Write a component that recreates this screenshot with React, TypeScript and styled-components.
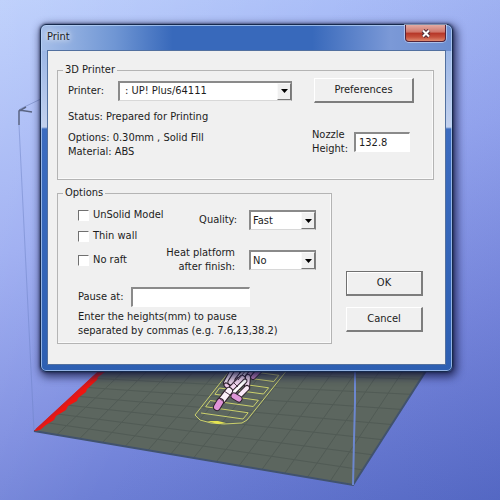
import React from 'react';
import styled, { createGlobalStyle } from 'styled-components';

const GlobalStyle = createGlobalStyle`
  *, *::before, *::after { box-sizing: border-box; }
  body { margin: 0; }
  body, button, input, select {
    font-family: "DejaVu Sans Condensed", Tahoma, "Noto Sans", sans-serif;
    font-size: 11px;
    line-height: 14px;
    color: #1c1c1c;
  }
`;

const Desktop = styled.main`
  position: relative;
  min-height: 100vh;
  overflow: hidden;
  padding: 24px 47px 40px 40px;
  background:
    linear-gradient(115deg, rgba(255, 255, 255, 0.16), rgba(255, 255, 255, 0) 45%, rgba(40, 50, 160, 0.12)),
    linear-gradient(165deg, #b4c9fb, #98a9f1 40%, #7b8bdf 70%, #5a6fc8);
`;

const Scene = styled.svg`
  position: absolute;
  inset: 0;
  width: 100%;
  height: 100%;
`;

const Dialog = styled.section`
  position: relative;
  padding: 0 6px 6px;
  border: 1px solid #16294d;
  border-radius: 6px;
  background:
    linear-gradient(90deg, rgba(178, 200, 238, 0.9), rgba(130, 165, 220, 0.75) 18%, rgba(60, 105, 185, 0) 32%, rgba(60, 105, 185, 0) 66%, rgba(140, 165, 222, 0.8) 85%, rgba(120, 150, 212, 0.8)) 0 0 / 100% 26px no-repeat,
    linear-gradient(180deg, #3869bb 0, #3869bb 26px, #9db7e6 26px, #c3d1ee 102px, #3c6cc0 104px, #2d5fb2);
  box-shadow: inset 0 0 0 1px rgba(190, 215, 250, 0.7), 0 0 3px rgba(10, 15, 45, 0.8), 2px 3px 9px 2px rgba(20, 24, 66, 0.75);
`;

const TitleBar = styled.header`
  display: flex;
  justify-content: space-between;
  align-items: flex-start;
  height: 25px;
`;

const Title = styled.h1`
  margin: 4px 0 0;
  font-size: 11px;
  line-height: 16px;
  font-weight: 400;
  text-shadow: 0 0 5px #fff, 0 0 8px #fff;
`;

const CloseButton = styled.button`
  display: grid;
  place-items: center;
  width: 41px;
  height: 17px;
  padding: 0;
  border: 1px solid #54243a;
  border-top: 0;
  border-radius: 0 0 4px 4px;
  background: linear-gradient(#e3aba4, #cf7468 45%, #b53527 50%, #c5503c 75%, #de8a70);
  box-shadow: 0 0 0 1px rgba(220, 230, 250, 0.55);
`;

const Client = styled.div`
  padding: 12px 11px 20px 9px;
  border: 1px solid #52709f;
  background: #f0f0f0;
`;

const Group = styled.fieldset`
  flex: 1;
  min-width: 0;
  margin: 0;
  padding: 0;
  border: 1px solid #b4b4b4;
  box-shadow: inset -1px -1px 0 #fafafa;
`;

const GroupBody = styled.div<{ $pad: string }>`
  padding: ${(p) => p.$pad};
`;

const Legend = styled.legend`
  margin-left: 5px;
  padding: 0 2px;
  line-height: 14px;
`;

const Row = styled.div<{ $gap?: number; $top?: number }>`
  display: flex;
  align-items: center;
  gap: ${(p) => p.$gap ?? 0}px;
  margin-top: ${(p) => p.$top ?? 0}px;
`;

const GrowRow = styled(Row)`
  flex: 1;
`;

const NozzleRow = styled(Row)`
  padding-right: 4px;
`;

const Spread = styled(Row)`
  justify-content: space-between;
  align-items: flex-start;
`;

const Text = styled.p<{ $top?: number }>`
  margin: ${(p) => p.$top ?? 0}px 0 0;
  white-space: nowrap;
`;

const Label = styled.label<{ $width?: number }>`
  flex: none;
  width: ${(p) => (p.$width ? `${p.$width}px` : 'auto')};
  white-space: nowrap;
`;

const RightLabel = styled(Label)`
  text-align: right;
`;

const Field = styled.input<{ $width: number }>`
  width: ${(p) => p.$width}px;
  height: 20px;
  padding: 0 3px;
  border: 1px solid #fff;
  border-top: 2px solid #8a8a8a;
  border-left: 2px solid #8a8a8a;
  border-radius: 0;
  background: #fff;
  outline: 0;
`;

const SelectBox = styled.span<{ $width?: number }>`
  position: relative;
  display: block;
  flex: ${(p) => (p.$width ? 'none' : 1)};
  width: ${(p) => (p.$width ? `${p.$width}px` : 'auto')};
`;

const NativeSelect = styled.select<{ $indent: number }>`
  appearance: none;
  display: block;
  width: 100%;
  height: 20px;
  padding: 0 18px 0 ${(p) => p.$indent}px;
  border: 1px solid #808080;
  border-top: 2px solid #8a8a8a;
  border-left: 2px solid #8a8a8a;
  border-bottom-color: #d8d8d8;
  border-radius: 0;
  background: #fff;
  outline: 0;
`;

const DropArrow = styled.span`
  position: absolute;
  top: 2px;
  right: 1px;
  bottom: 1px;
  display: grid;
  place-items: center;
  width: 14px;
  border: 1px solid #fafafa;
  border-right-color: #777;
  border-bottom-color: #777;
  background: #f0f0f0;
  pointer-events: none;
`;

const Button = styled.button<{ $width: number; $primary?: boolean }>`
  width: ${(p) => p.$width}px;
  height: 25px;
  padding: 0;
  border: 1px solid ${(p) => (p.$primary ? '#707070' : '#fff')};
  border-right: 2px solid #7d7d7d;
  border-bottom: 2px solid #7d7d7d;
  border-radius: 0;
  background: #f0f0f0;
  box-shadow: ${(p) => (p.$primary ? 'inset 1px 1px 0 #fff' : 'none')};
`;

const Check = styled.input`
  appearance: none;
  flex: none;
  width: 11px;
  height: 11px;
  margin: 0;
  border: 1px solid #fff;
  border-top-color: #707070;
  border-left-color: #707070;
  background: #fff;
  &:checked { background: #444; }
`;

const Checks = styled.div`
  display: flex;
  flex-direction: column;
`;

const Selects = styled.div`
  display: flex;
  flex-direction: column;
  align-items: flex-end;
  gap: 16px;
  padding-top: 2px;
`;

const Lower = styled.div`
  display: flex;
  align-items: flex-end;
  gap: 14px;
  margin-top: 6px;
`;

const Actions = styled.div`
  display: flex;
  flex-direction: column;
  gap: 11px;
  margin: 0 11px 12px 0;
`;

type Point = [number, number];
const mix = (a: Point, b: Point, t: number): Point => [a[0] + (b[0] - a[0]) * t, a[1] + (b[1] - a[1]) * t];
const line = (a: Point, b: Point) => `M${a.join(' ')}L${b.join(' ')}`;

const plate = {
  nearLeft: [34, 431] as Point,
  nearRight: [353, 485] as Point,
  farRight: [440, 349] as Point,
  farLeft: [121, 352] as Point,
};

const columns = Array.from({ length: 13 }, (_, i) => (i + 1) / 14).map((t) =>
  line(mix(plate.nearLeft, plate.nearRight, t), mix(plate.farLeft, plate.farRight, t)),
);
const rows = Array.from({ length: 8 }, (_, i) => (i + 1) / 9).map((t) =>
  line(mix(plate.nearLeft, plate.farLeft, t), mix(plate.nearRight, plate.farRight, t)),
);

const raftLines = Array.from({ length: 9 }, (_, i) => {
  const left = mix([201, 413], [238, 363], i / 8);
  const right = mix([243, 419], [284, 369], i / 8);
  return i % 2 ? [right, left] : [left, right];
}).flat();
const raftInfill = `M${raftLines.map((p) => p.join(' ')).join('L')}`;

const limbs: { d: string; width: number; color: string }[] = [
  { d: 'M262 368L253 377', width: 4, color: '#c583bd' },
  { d: 'M252 369L246 378', width: 5, color: '#dca9d6' },
  { d: 'M234 368L226 383', width: 4, color: '#f3e3f2' },
  { d: 'M226 385L231 389', width: 3, color: '#ecc8e8' },
  { d: 'M240 368L231 382', width: 5, color: '#e9d3e8' },
  { d: 'M248 368L238 380', width: 5, color: '#f7edf7' },
  { d: 'M248 377L247 387', width: 4, color: '#f2d8ef' },
  { d: 'M247 388L240 395', width: 4, color: '#fae9f8' },
  { d: 'M242 379L229 392', width: 6, color: '#f4d9f1' },
  { d: 'M245 381L233 393', width: 3, color: '#fff' },
  { d: 'M229 391L222 400', width: 6, color: '#fbf1fa' },
  { d: 'M234 396L239 399', width: 5, color: '#dd96d6' },
  { d: 'M220 402L217 407', width: 6, color: '#e193d8' },
];

const PrintBed = () => (
  <Scene viewBox="0 0 500 500" preserveAspectRatio="xMinYMin slice" aria-hidden="true">
    <path d="M19 125L34 431" stroke="#6f84c8" strokeWidth="1" opacity=".5" />
    <path d="M20 109L45 97" stroke="#8d9fd8" strokeWidth="1" />
    <path d="M19 125V111L26 107M19 110L32 112" fill="none" stroke="#5a6482" strokeWidth="1.5" />
    <path d="M34 431L121 352L440 349L353 485Z" fill="#5c665f" />
    <path d={[...columns, ...rows].join('')} stroke="#4a544f" strokeWidth="1" opacity=".6" />
    <path d="M34 431L353 485L440 349" fill="none" stroke="#41526d" strokeWidth="2" />
    <path d="M34 431L109 361L105 372L98 377L97 380L87 389L86 392L78 398L77 401L68 406L66 410L56 416L54 420L46 425L40 430Z" fill="#ee1510" />
    <path d="M36 430L108 364" stroke="#d41c20" strokeWidth="2" />
    <path d="M355 360V402L354 440L353 485" fill="none" stroke="#6c87cf" strokeWidth="2" />
    <g fill="none" stroke="#cbd06c" strokeWidth="1">
      <path d="M228 373L195 415L200 420L211 423L224 424L242 423L247 420L288 369" />
      <path d={raftInfill} />
    </g>
    <path d="M207 421L218 421L226 423L218 424Z" fill="#e6e450" />
    {limbs.map(({ d, width, color }) => (
      <g key={d} fill="none">
        <path d={d} stroke="#2d1f2b" strokeWidth={width + 2} strokeLinecap="round" />
        <path d={d} stroke={color} strokeWidth={width} strokeLinecap="round" />
      </g>
    ))}
    <path d="M238 377L232 384M224 391L230 395M233 382L238 387M219 398L224 402M236 369L240 373M246 370L238 380" stroke="#4a3447" strokeWidth="1" />
  </Scene>
);

type ComboProps = { id: string; options: string[]; width?: number; indent?: number };

const Combo = ({ id, options, width, indent = 2 }: ComboProps) => (
  <SelectBox $width={width}>
    <NativeSelect id={id} $indent={indent}>
      {options.map((o) => <option key={o}>{o}</option>)}
    </NativeSelect>
    <DropArrow>
      <svg width="7" height="4" viewBox="0 0 7 4"><path d="M0 0H7L3.5 4Z" fill="#000" /></svg>
    </DropArrow>
  </SelectBox>
);

const CheckRow = ({ id, label, top }: { id: string; label: string; top?: number }) => (
  <Row $gap={4} $top={top}>
    <Check type="checkbox" id={id} />
    <Label htmlFor={id}>{label}</Label>
  </Row>
);

export default function App() {
  return (
    <>
      <GlobalStyle />
      <Desktop>
        <PrintBed />
        <Dialog role="dialog" aria-labelledby="title">
          <TitleBar>
            <Title id="title">Print</Title>
            <CloseButton aria-label="Close">
              <svg width="10" height="9" viewBox="0 0 10 9">
                <path d="M2 1.5L8 7.5M8 1.5L2 7.5" stroke="#4b2b38" strokeWidth="4" />
                <path d="M2 1.5L8 7.5M8 1.5L2 7.5" stroke="#fff" strokeWidth="2" />
              </svg>
            </CloseButton>
          </TitleBar>
          <Client>
            <Group>
              <Legend>3D Printer</Legend>
              <GroupBody $pad="1px 19px 20px 10px">
                <Row $gap={22}>
                  <GrowRow>
                    <Label htmlFor="printer" $width={50}>Printer:</Label>
                    <Combo id="printer" options={[': UP! Plus/64111']} indent={5} />
                  </GrowRow>
                  <Button type="button" $width={100}>Preferences</Button>
                </Row>
                <Text $top={7}>Status: Prepared for Printing</Text>
                <Spread $top={4}>
                  <Text $top={3}>Options: 0.30mm , Solid Fill<br />Material: ABS</Text>
                  <NozzleRow $gap={6}>
                    <Label htmlFor="nozzle">Nozzle<br />Height:</Label>
                    <Field id="nozzle" $width={56} defaultValue="132.8" />
                  </NozzleRow>
                </Spread>
              </GroupBody>
            </Group>
            <Lower>
              <Group>
                <Legend>Options</Legend>
                <GroupBody $pad="8px 15px 5px 20px">
                  <Spread>
                    <Checks>
                      <CheckRow id="unsolid" label="UnSolid Model" />
                      <CheckRow id="thin" label="Thin wall" top={7} />
                      <CheckRow id="raft" label="No raft" top={10} />
                    </Checks>
                    <Selects>
                      <Row $gap={12}>
                        <RightLabel htmlFor="quality">Quality:</RightLabel>
                        <Combo id="quality" options={['Fast', 'Normal', 'Fine']} width={67} />
                      </Row>
                      <Row $gap={14}>
                        <RightLabel htmlFor="heat">Heat platform<br />after finish:</RightLabel>
                        <Combo id="heat" options={['No', 'Yes']} width={67} />
                      </Row>
                    </Selects>
                  </Spread>
                  <Row $top={13}>
                    <Label htmlFor="pause" $width={53}>Pause at:</Label>
                    <Field id="pause" $width={119} />
                  </Row>
                  <Text $top={3}>Enter the heights(mm) to pause<br />separated by commas (e.g. 7.6,13,38.2)</Text>
                </GroupBody>
              </Group>
              <Actions>
                <Button type="button" $width={77} $primary>OK</Button>
                <Button type="button" $width={77}>Cancel</Button>
              </Actions>
            </Lower>
          </Client>
        </Dialog>
      </Desktop>
    </>
  );
}
